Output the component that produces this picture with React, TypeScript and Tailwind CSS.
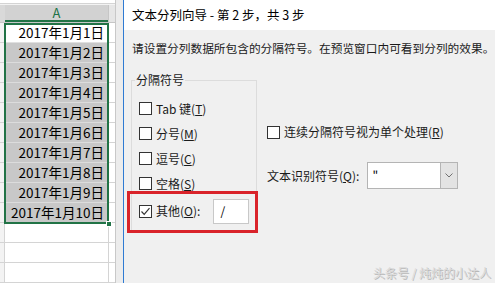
const dates = Array.from({ length: 10 }, (_, i) => `2017年1月${i + 1}日`);

function Checkbox({ checked = false }: { checked?: boolean }) {
  return (
    <span className="flex size-[13px] shrink-0 items-center justify-center border border-[#333333] bg-white">
      {checked && (
        <svg viewBox="0 0 11 11" className="size-[11px]">
          <path d="M1.5 5.5 L4.2 8.3 L9.5 2.2" fill="none" stroke="#333333" strokeWidth="1.2" />
        </svg>
      )}
    </span>
  );
}

function Option({ label, keyChar, rest = ")" }: { label: string; keyChar: string; rest?: string }) {
  return (
    <span className="whitespace-nowrap text-[12px] leading-[16px] text-[#1a1a1a]">
      {label}(<span className="underline">{keyChar}</span>
      {rest}
    </span>
  );
}

function Sheet() {
  return (
    <div className="flex h-full w-[123px] shrink-0 overflow-hidden bg-white">
      <div className="flex w-[115px] flex-col">
        <div className="h-[12px] border-b border-[#d4d4d4] bg-white" />
        <div className="h-[3px] bg-[#f3f3f3]" />
        <div className="flex h-[18px] border-b border-[#c6c6c6] bg-[#e6e6e6]">
          <div className="w-[5px] bg-[#d9d9d9]" />
          <div className="flex w-[103px] items-center justify-center border-b-2 border-[#217346] bg-[#d2d2d2] text-[13px] text-[#217346]">
            A
          </div>
          <div className="w-[7px] border-l border-[#c6c6c6]" />
        </div>
        <div className="relative flex">
          <div className="flex w-[5px] flex-col bg-[#f3f3f3]">
            {Array.from({ length: 13 }).map((_, i) => (
              <div key={i} className="h-[20px] border-b border-r border-[#d4d4d4]" />
            ))}
          </div>
          <div className="flex w-[103px] flex-col">
            {dates.map((d, i) => (
              <div
                key={d}
                className={`flex h-[20px] items-center justify-end border-b pr-[4px] text-[13.5px] text-black ${
                  i === 0 ? "border-[#e0e0e0] bg-white" : "border-[#dcdcdc] bg-[#c8c8c8]"
                }`}
              >
                {d}
              </div>
            ))}
            {Array.from({ length: 3 }).map((_, i) => (
              <div key={i} className="h-[20px] border-b border-[#d4d4d4]" />
            ))}
          </div>
          <div className="flex w-[7px] flex-col border-l border-[#d4d4d4]">
            {Array.from({ length: 13 }).map((_, i) => (
              <div key={i} className="h-[20px] border-b border-[#d4d4d4]" />
            ))}
          </div>
          <div className="pointer-events-none absolute left-[4px] top-0 h-[201px] w-[105px] border-2 border-[#217346]" />
          <div className="absolute left-[106px] top-[198px] size-[6px] border border-white bg-[#217346]" />
        </div>
      </div>
      <div className="w-[8px] border-l border-[#c8c8c8] bg-[#ececec]" />
    </div>
  );
}

function Dialog() {
  return (
    <div className="flex h-full min-w-0 flex-1 flex-col border-l border-[#2f7bd3]">
      <div className="flex h-[30px] items-center bg-white pl-[8px] text-[12.5px] text-black">
        文本分列向导 - 第 2 步，共 3 步
      </div>
      <div className="relative flex-1 bg-[#f0f0f0]">
        <div className="whitespace-nowrap pl-[8px] pt-[9px] text-[11.7px] leading-[17px] text-[#1a1a1a]">
          请设置分列数据所包含的分隔符号。在预览窗口内可看到分列的效果。
        </div>
        <div className="mt-[24px] flex pl-[7px]">
          <div className="relative h-[152px] w-[126px] shrink-0 border border-[#dcdcdc] pl-[7px] pt-[15px]">
            <span className="absolute -top-[9px] left-[3px] bg-[#f0f0f0] px-[1px] text-[12px] leading-[16px] text-[#1a1a1a]">
              分隔符号
            </span>
            <div className="flex h-[25px] items-center gap-[4px]">
              <Checkbox />
              <Option label="Tab 键" keyChar="T" />
            </div>
            <div className="flex h-[25px] items-center gap-[4px]">
              <Checkbox />
              <Option label="分号" keyChar="M" />
            </div>
            <div className="flex h-[25px] items-center gap-[4px]">
              <Checkbox />
              <Option label="逗号" keyChar="C" />
            </div>
            <div className="flex h-[25px] items-center gap-[4px]">
              <Checkbox />
              <Option label="空格" keyChar="S" />
            </div>
            <div className="flex h-[30px] items-center gap-[4px]">
              <Checkbox checked />
              <Option label="其他" keyChar="O" rest="):" />
              <div className="ml-[9px] flex h-[25px] w-[36px] items-center border border-[#c8c8c8] bg-white pl-[6px] text-[12px] text-black">
                /
              </div>
            </div>
            <div className="pointer-events-none absolute left-[-5px] top-[110px] h-[42px] w-[131px] border-[3px] border-[#d9232a]" />
          </div>
          <div className="ml-[10px] flex flex-col pt-[44px]">
            <div className="flex h-[16px] items-center gap-[4px]">
              <Checkbox />
              <Option label="连续分隔符号视为单个处理" keyChar="R" />
            </div>
            <div className="mt-[22px] flex items-center">
              <Option label="文本识别符号" keyChar="Q" rest="):" />
              <div className="ml-[8px] flex h-[27px] w-[91px] border border-[#b4b4b4] bg-white">
                <div className="flex-1 pl-[4px] pt-[3px] text-[12px] text-black">"</div>
                <div className="flex w-[17px] items-center justify-center border-l border-[#b4b4b4] bg-[#e3e3e3]">
                  <svg viewBox="0 0 8 5" className="h-[5px] w-[8px]">
                    <path d="M0.5 0.5 L4 4 L7.5 0.5" fill="none" stroke="#707070" strokeWidth="1" />
                  </svg>
                </div>
              </div>
            </div>
          </div>
        </div>
        <span className="absolute bottom-[3px] right-[4px] whitespace-nowrap text-[12px] leading-[14px] text-[#dadada] [text-shadow:1px_1px_0_#b8b8b8]">
          头条号 / 炖炖的小达人
        </span>
      </div>
    </div>
  );
}

export default function App() {
  return (
    <div className="flex h-[283px] w-[495px] overflow-hidden font-['Noto_Sans_CJK_SC',sans-serif]">
      <Sheet />
      <Dialog />
    </div>
  );
}
